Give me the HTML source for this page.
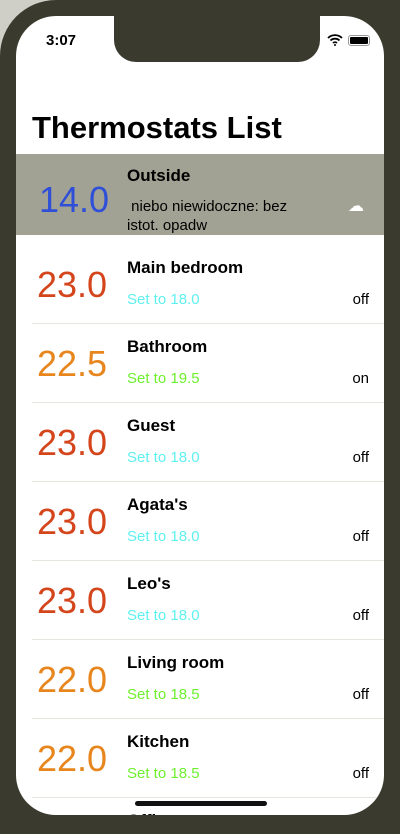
<!DOCTYPE html><html style="overflow:hidden"><head><style>
body{margin:0;width:400px;height:834px;background:#3a3a2e;overflow:hidden;font-family:"Liberation Sans",sans-serif;position:relative}
.tl{position:absolute;left:0;top:0;width:60px;height:60px;background:#cfcfc8}
.frame{position:absolute;left:0;top:0;width:400px;height:834px;background:#3a3a2e;border-radius:56px 56px 0 0}
.scr{position:absolute;left:16px;top:16px;width:368px;height:799px;background:#fff;border-radius:40px;overflow:hidden}
.notch{position:absolute;left:98px;top:0;width:206px;height:46px;background:#3a3a2e;border-radius:0 0 22px 22px}
.time{position:absolute;left:30px;top:16px;font-weight:bold;font-size:15px}
h1{position:absolute;left:16px;top:92px;margin:0;font-size:31px;font-weight:bold;line-height:40px}
.out{position:absolute;left:0;top:138px;width:368px;height:81px;background:#a2a294}
.row{position:absolute;left:0;width:368px;height:79px}
.sep{position:absolute;left:16px;right:0;bottom:0;height:1px;background:#e6e6e0}
.t{position:absolute;left:21px;top:20px;font-size:36px;line-height:40px}
.n{position:absolute;left:111px;top:13px;font-weight:bold;font-size:17px}
.s{position:absolute;left:111px;top:46px;font-size:15px}
.st{position:absolute;right:15px;top:46px;font-size:15px}
.r{color:#d4451c}.o{color:#e8861e}.c{color:#5ff0f0}.g{color:#6ef02c}
.home{position:absolute;left:119px;top:785px;width:132px;height:5px;border-radius:3px;background:#111}
</style></head><body>
<div class="tl"></div><div class="frame"></div>
<div class="scr">
<div class="notch"></div>
<div class="time">3:07</div>
<svg style="position:absolute;left:311px;top:18px" width="16" height="12" viewBox="0 0 16 12"><path d="M1 4a10 10 0 0 1 14 0M3.5 6.5a6.5 6.5 0 0 1 9 0M6 9a3 3 0 0 1 4 0" stroke="#000" stroke-width="1.8" fill="none"/><circle cx="8" cy="11" r="1" /></svg>
<div style="position:absolute;left:332px;top:19px;width:20px;height:9px;border:1px solid #999;border-radius:3px"><div style="margin:1px;height:7px;background:#000;border-radius:1px"></div></div>
<h1>Thermostats List</h1>
<div class="out">
<div class="t" style="color:#2f4fd8;left:23px;top:26px">14.0</div>
<div class="n" style="top:12px">Outside</div>
<div style="position:absolute;left:111px;top:43px;font-size:15px;line-height:19px;width:190px">&nbsp;niebo niewidoczne: bez istot. opadw</div>
<div style="position:absolute;left:332px;top:42px;color:#fff;font-size:16px">☁</div>
</div>
<div class="row" style="top:229px"><div class="t r">23.0</div><div class="n">Main bedroom</div><div class="s c">Set to 18.0</div><div class="st">off</div><div class="sep"></div></div>
<div class="row" style="top:308px"><div class="t o">22.5</div><div class="n">Bathroom</div><div class="s g">Set to 19.5</div><div class="st">on</div><div class="sep"></div></div>
<div class="row" style="top:387px"><div class="t r">23.0</div><div class="n">Guest</div><div class="s c">Set to 18.0</div><div class="st">off</div><div class="sep"></div></div>
<div class="row" style="top:466px"><div class="t r">23.0</div><div class="n">Agata's</div><div class="s c">Set to 18.0</div><div class="st">off</div><div class="sep"></div></div>
<div class="row" style="top:545px"><div class="t r">23.0</div><div class="n">Leo's</div><div class="s c">Set to 18.0</div><div class="st">off</div><div class="sep"></div></div>
<div class="row" style="top:624px"><div class="t o">22.0</div><div class="n">Living room</div><div class="s g">Set to 18.5</div><div class="st">off</div><div class="sep"></div></div>
<div class="row" style="top:703px"><div class="t o">22.0</div><div class="n">Kitchen</div><div class="s g">Set to 18.5</div><div class="st">off</div><div class="sep"></div></div>
<div class="row" style="top:782px"><div class="n">Office</div></div>
<div class="home"></div>
</div>
</body></html>
